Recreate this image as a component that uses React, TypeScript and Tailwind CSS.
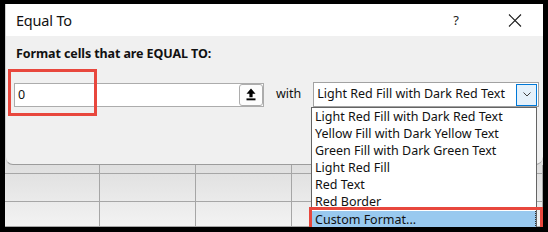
import React from "react";

const font = { fontFamily: '"Noto Sans", "Liberation Sans", sans-serif' };

const items = [
  "Light Red Fill with Dark Red Text",
  "Yellow Fill with Dark Yellow Text",
  "Green Fill with Dark Green Text",
  "Light Red Fill",
  "Red Text",
  "Red Border",
];

export default function App() {
  return (
    <div
      className="w-[548px] h-[232px] bg-black pt-[4px] pl-[5px] pr-[5px] pb-[5px] overflow-hidden"
      style={font}
    >
      <div className="relative w-full h-full flex flex-col overflow-hidden bg-[linear-gradient(to_bottom,#a9a9a9,#f3f3f3)]">
        {/* Dialog */}
        <div className="h-[161px] shrink-0 flex flex-col bg-[#f0f0f0] rounded-b-[8px] border-b border-l border-[#9c9c9c] border-l-[#d0d0d0] overflow-hidden">
          {/* Title bar */}
          <div className="h-[32px] shrink-0 bg-white flex items-center pl-[10px] pr-[16px]">
            <span className="text-[14.5px] text-[#111] leading-none tracking-[-0.2px]">Equal To</span>
            <span className="ml-auto text-[13px] text-[#222] leading-none mr-[49px]">?</span>
            <svg width="14" height="13" viewBox="0 0 14 13" className="mr-[5px]">
              <path d="M1 0.5 L13 12.5 M13 0.5 L1 12.5" stroke="#1a1a1a" strokeWidth="1.1" fill="none" />
            </svg>
          </div>
          {/* Body */}
          <div className="flex flex-col pl-[10px] pt-[10px]">
            <div className="text-[12.5px] font-bold text-[#111] leading-[16px] tracking-[-0.1px]">
              Format cells that are EQUAL TO:
            </div>
            <div className="flex items-center mt-[20px] -ml-[2px]">
              <div className="w-[250px] h-[24px] flex border border-[#acacac] bg-white">
                <div className="flex-1 pl-[3px] text-[12.5px] leading-[22px] text-[#111]">0</div>
                <div className="w-[24px] h-[22px] rounded-[3px] border border-[#adadad] bg-[#fdfdfd] flex items-center justify-center">
                  <svg width="10" height="13" viewBox="0 0 10 13">
                    <path d="M5 0.5 L9.5 5.8 L6.6 5.8 L6.6 9.2 L3.4 9.2 L3.4 5.8 L0.5 5.8 Z" fill="#000" />
                    <rect x="0.5" y="10.4" width="9" height="1.9" fill="#000" />
                  </svg>
                </div>
              </div>
              <span className="ml-[12px] text-[12.5px] text-[#111] leading-none">with</span>
              <div className="ml-[12px] w-[226px] h-[25px] flex items-center border border-[#a2a2a2] bg-white">
                <span className="flex-1 pl-[3px] text-[12.5px] text-[#111] leading-none whitespace-nowrap">
                  Light Red Fill with Dark Red Text
                </span>
                <div className="w-[21px] h-[22px] mr-[1px] border border-[#0078d7] bg-[#e5f1fb] flex items-center justify-center">
                  <svg width="8" height="5" viewBox="0 0 8 5">
                    <path d="M0.5 0.5 L4 4 L7.5 0.5" stroke="#404040" strokeWidth="1" fill="none" />
                  </svg>
                </div>
              </div>
            </div>
          </div>
        </div>

        {/* Spreadsheet behind */}
        <div className="flex-1 grid grid-cols-[95px_96px_96px_96px_96px_1fr] grid-rows-[9px_28px_1fr]">
          {Array.from({ length: 18 }).map((_, i) => (
            <div key={i} className="border-r border-b border-[#a6a6a6]" />
          ))}
        </div>

        {/* Dropdown list overlay */}
        <div className="absolute left-[306px] top-[103px] w-[226px] bottom-0 bg-white border border-b-0 border-[#646464] pt-0">
          {items.map((t) => (
            <div
              key={t}
              className="h-[17px] pl-[3px] text-[12.5px] leading-[17px] text-[#111] whitespace-nowrap"
            >
              {t}
            </div>
          ))}
          <div className="h-[17px] mt-[1px] pl-[3px] text-[12.5px] leading-[17px] text-[#111] bg-[#99c9ef] border-r border-dotted border-r-[#333] whitespace-nowrap">
            Custom Format...
          </div>
        </div>

        {/* Annotation boxes */}
        <div className="absolute left-[3px] top-[65px] w-[89px] h-[47px] border-[3px] border-[#e8473d]" />
        <div className="absolute left-[304px] top-[203px] w-[234px] bottom-0 border-[3px] border-b-0 border-[#e8473d]" />
      </div>
    </div>
  );
}
